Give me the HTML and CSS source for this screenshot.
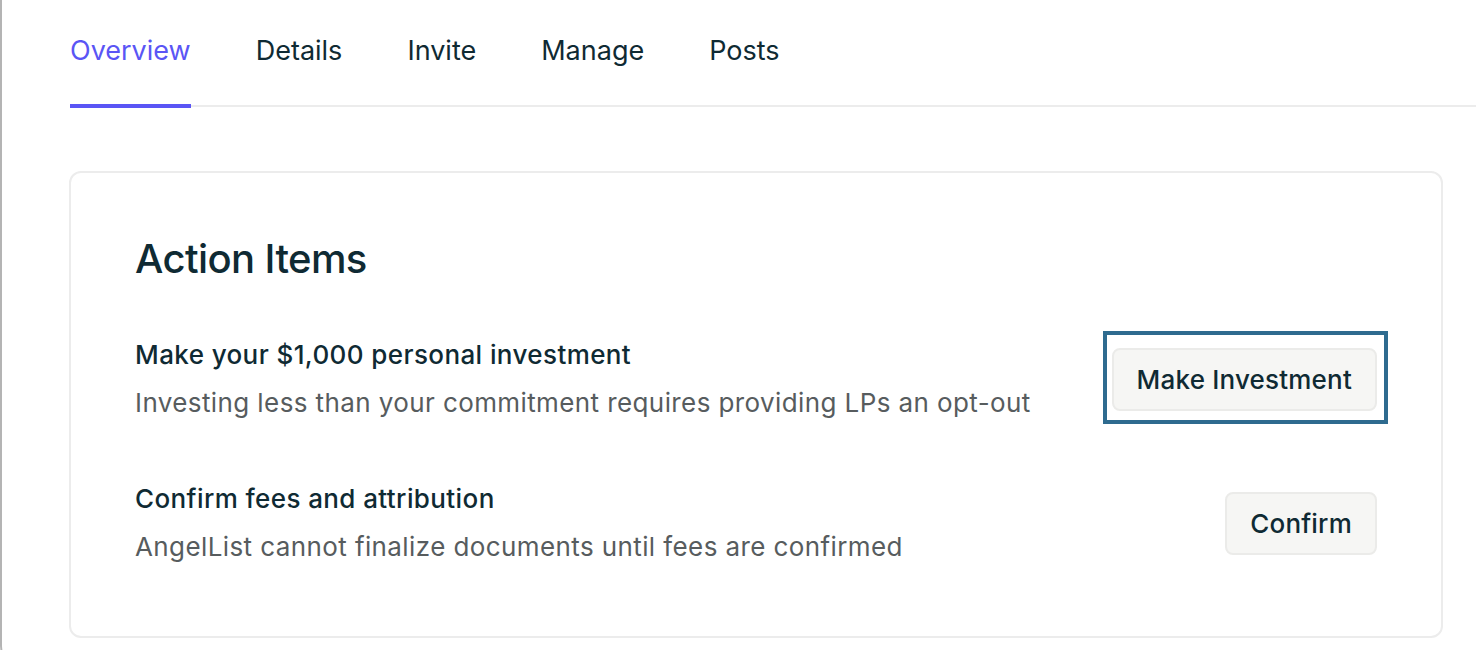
FILE: index.html
```html
<!DOCTYPE html>
<html lang="en">
<head>
<meta charset="utf-8">
<title>Overview</title>
<link rel="stylesheet" href="styles.css">
</head>
<body>
<div class="frame">
  <nav class="tabs">
    <a class="tab active">Overview</a>
    <a class="tab">Details</a>
    <a class="tab">Invite</a>
    <a class="tab">Manage</a>
    <a class="tab">Posts</a>
  </nav>
  <section class="card">
    <h2 class="card-title">Action Items</h2>
    <div class="items">
      <div class="item">
        <div class="item-text">
          <div class="item-title">Make your $1,000 personal investment</div>
          <div class="item-desc">Investing less than your commitment requires providing LPs an opt-out</div>
        </div>
        <button class="btn focused">Make Investment</button>
      </div>
      <div class="item">
        <div class="item-text">
          <div class="item-title">Confirm fees and attribution</div>
          <div class="item-desc">AngelList cannot finalize documents until fees are confirmed</div>
        </div>
        <button class="btn">Confirm</button>
      </div>
    </div>
  </section>
</div>
</body>
</html>
```

FILE: styles.css
```css
html, body {
  margin: 0;
  padding: 0;
  background: #ffffff;
  overflow: hidden;
}
body {
  font-family: Inter, "Liberation Sans", sans-serif;
  color: #0f2a33;
}
.frame {
  box-sizing: border-box;
  height: 668px;
  border-left: 2px solid #b4b4b4;
  border-bottom-left-radius: 22px;
  padding-left: 68px;
}
.tabs {
  display: flex;
  gap: 65px;
  border-bottom: 2px solid #ececec;
}
.tab {
  position: relative;
  font-size: 27px;
  line-height: 32px;
  padding: 35px 0 38px;
  color: #0f2a33;
  cursor: pointer;
}
.tab.active {
  color: #5a55f5;
}
.tab.active::after {
  content: "";
  position: absolute;
  left: 0;
  right: 0;
  bottom: -3px;
  height: 4px;
  background: #5a55f5;
}
.card {
  margin: 64px 33px 0 -1px;
  border: 2px solid #ececec;
  border-radius: 12px;
  padding: 62px 64px 71px;
}
.card-title {
  margin: 0 0 54px;
  font-size: 40px;
  line-height: 48px;
  font-weight: 500;
  letter-spacing: -0.6px;
}
.items {
  display: flex;
  flex-direction: column;
  gap: 60px;
}
.item {
  display: flex;
  align-items: center;
  justify-content: space-between;
}
.item-title {
  font-size: 26px;
  line-height: 36px;
  font-weight: 500;
  letter-spacing: 0.4px;
}
.item-desc {
  margin-top: 12px;
  font-size: 26px;
  line-height: 36px;
  letter-spacing: 0.4px;
  color: #575c5e;
}
.btn {
  position: relative;
  box-sizing: border-box;
  height: 63px;
  padding: 0 23px;
  background: #f6f6f4;
  border: 2px solid #ebebe9;
  border-radius: 8px;
  font-family: inherit;
  font-size: 26px;
  font-weight: 500;
  letter-spacing: 0.2px;
  color: #0f2a33;
  cursor: pointer;
}
.btn.focused::before {
  content: "";
  position: absolute;
  top: -19px;
  bottom: -15px;
  left: -11px;
  right: -13px;
  border: 4px solid #2e6b8f;
}
```
